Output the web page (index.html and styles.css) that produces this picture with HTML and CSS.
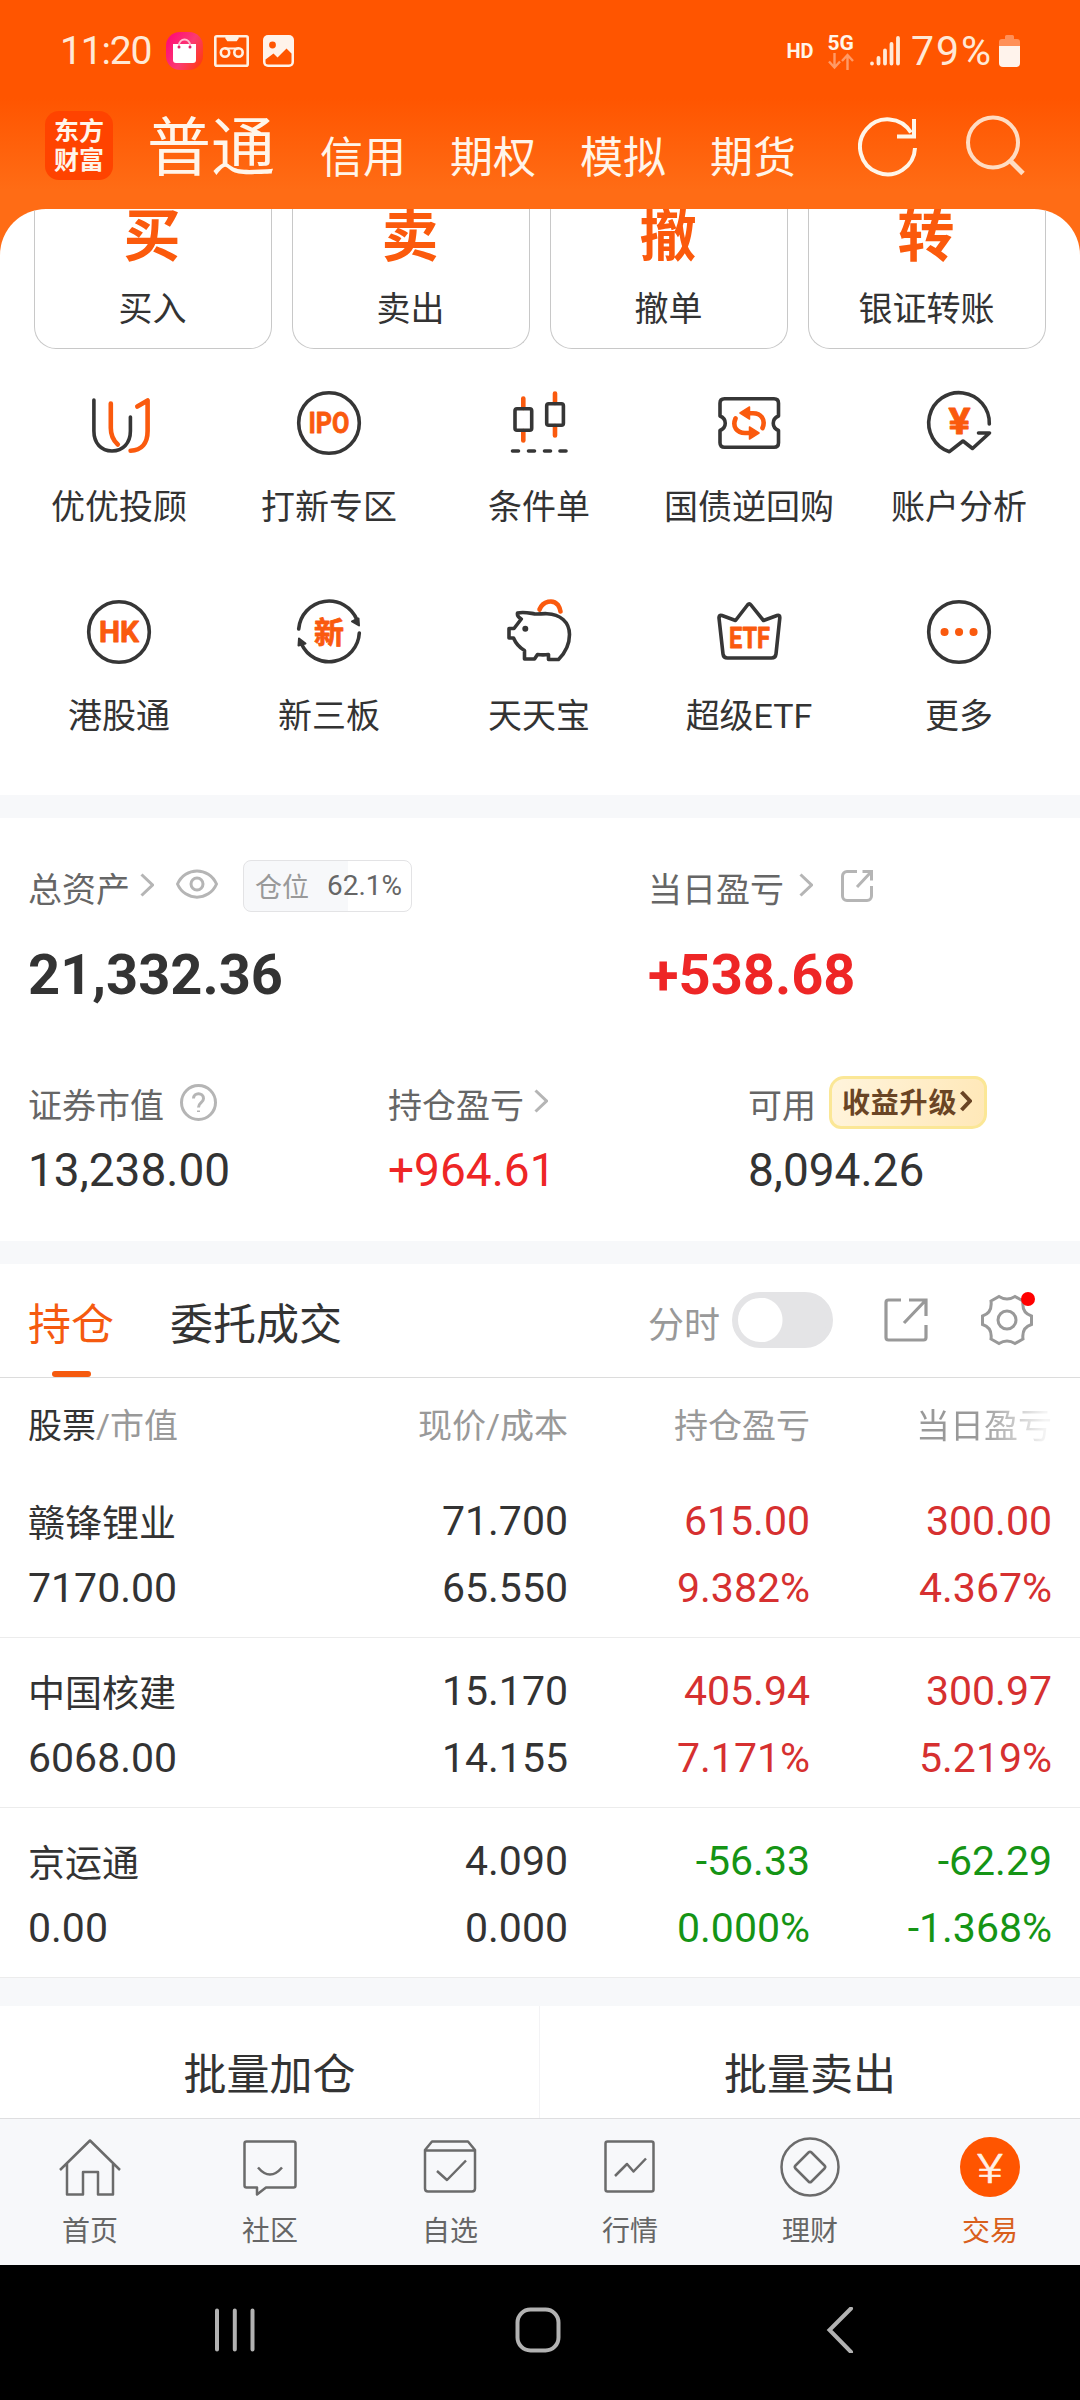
FILE: index.html
```html
<!doctype html>
<html lang="zh-CN">
    <head>
        <meta charset="UTF-8" />
        <meta name="viewport" content="width=device-width, initial-scale=1.0" />
        <title>交易</title>
        <link rel="stylesheet" href="styles.css">
    </head>
    <body>
        <header class="header">
            <div class="status-bar">
                <span class="time">11:20</span>
                <svg class="st-bag" width="37" height="38" viewBox="0 0 37 38">
                    <defs>
                        <linearGradient id="bag" x1="0" y1="0.2" x2="1" y2="0.8">
                            <stop offset="0" stop-color="#ff0a78" />
                            <stop offset="0.55" stop-color="#fb3a72" />
                            <stop offset="1" stop-color="#ff3a10" />
                        </linearGradient>
                    </defs>
                    <rect width="37" height="38" rx="14" fill="url(#bag)" />
                    <path d="M7 12h23v16a3 3 0 0 1-3 3H10a3 3 0 0 1-3-3z" fill="#fff" />
                    <path d="M13 15v-2a5.500 5.500 0 0 1 11 0v2" fill="none" stroke="#ffc0d0" stroke-width="1.800" />
                    <circle cx="13" cy="15" r="1.500" fill="#e0206a" />
                    <circle cx="24" cy="15" r="1.500" fill="#e0206a" />
                </svg>
                <svg class="st-tape" width="35" height="32" viewBox="0 0 35 32" fill="none" stroke="#fff0e2" stroke-width="2.600">
                    <rect x="1.300" y="1.300" width="32.400" height="29.400" rx="1.500" />
                    <path d="M12 2l2 3h8l2-3" fill="#fff0e2" />
                    <circle cx="11" cy="17.500" r="4.200" />
                    <circle cx="24.500" cy="17.500" r="4.200" />
                    <path d="M11 13.500h13.500" stroke-width="2" />
                </svg>
                <svg class="st-image" width="31" height="32" viewBox="0 0 31 32">
                    <rect width="31" height="32" rx="5" fill="#fff3ea" />
                    <circle cx="9.500" cy="10" r="3.400" fill="#ff5500" />
                    <path d="M2.500 24.500l8-6 4 4 9-9 5 5v8.500a2.500 2.500 0 0 1-2.500 2.500H5a2.500 2.500 0 0 1-2.500-2.500z" fill="#ff5500" />
                </svg>
                <span class="status-gap"></span>
                <span class="hd">HD</span>
                <span class="net">
                    <span>5G</span>
                    <svg width="26" height="17" viewBox="0 0 26 17" fill="none" stroke="#ff9a66" stroke-width="2.400">
                        <path d="M6.500 0v14M1 8.500l5.500 6 5.500-6M19.500 17V2M14 8l5.500-6 5.500 6" />
                    </svg>
                </span>
                <svg class="st-signal" width="30" height="30" viewBox="0 0 30 30" stroke="#ffe9d8" stroke-width="3.800" stroke-linecap="round">
                    <path d="M2 27.500v.1M8.500 22v5.500M15 14.500v13M21.500 8v19.500M28 2v25.500" />
                </svg>
                <span class="percent">79%</span>
                <svg class="st-battery" width="21" height="32" viewBox="0 0 21 32">
                    <path d="M6 4V1.500Q6 0 7.500 0h6Q15 0 15 1.500V4h3q3 0 3 3v5H0V7q0-3 3-3z" fill="#ff9058" />
                    <path d="M0 11h21v17q0 4-4 4H4q-4 0-4-4z" fill="#fff3ec" />
                </svg>
            </div>
            <nav class="top-nav">
                <div class="logo"><span>东方</span><span>财富</span></div>
                <span class="market active">普通</span>
                <span class="market">信用</span>
                <span class="market">期权</span>
                <span class="market">模拟</span>
                <span class="market">期货</span>
                <svg class="ic-refresh" width="62" height="62" viewBox="0 0 62 62" fill="none" stroke="#fff5e8" stroke-width="4">
                    <path d="M57 33A27.500 27.500 0 1 1 53 17.500" />
                    <path d="M39 21.500h17V4" />
                </svg>
                <svg class="ic-search" width="62" height="62" viewBox="0 0 62 62" fill="none" stroke="#ffdcc2" stroke-width="4">
                    <circle cx="29" cy="28.500" r="25" />
                    <path d="M46 46.500l13 13" stroke-width="5" />
                </svg>
            </nav>
        </header>

        <main class="panel-wrap">
            <section class="panel">
                <div class="cards">
                    <div class="card"><b>买</b><span>买入</span></div>
                    <div class="card"><b>卖</b><span>卖出</span></div>
                    <div class="card"><b>撤</b><span>撤单</span></div>
                    <div class="card"><b>转</b><span>银证转账</span></div>
                </div>
                <div class="quick">
                    <div class="quick-item">
                        <svg class="icon" viewBox="0 0 64 64">
                            <path d="M6.900 9v31C6.900 52 14 60 25 60s18.400-8 18.400-20V26" />
                            <path class="hot" d="M23.800 12.500V37c0 8 2.500 12.500 7 16.500M50.300 15.500l10.300-6V40c0 12-6 19.500-17 19.700" />
                        </svg>
                        <span>优优投顾</span>
                    </div>
                    <div class="quick-item">
                        <svg class="icon" viewBox="0 0 64 64">
                            <circle cx="32" cy="32" r="30.300" />
                            <text class="icon-text" x="11.500" y="42" font-size="29" textLength="41" lengthAdjust="spacingAndGlyphs">IPO</text>
                        </svg>
                        <span>打新专区</span>
                    </div>
                    <div class="quick-item">
                        <svg class="icon" viewBox="0 0 64 64">
                            <path class="hot" d="M16.300 7.500V17M16.300 40v9.500M48 2.500V12M48 35v9.500" />
                            <rect x="8" y="17.800" width="16.700" height="21.500" rx="2" />
                            <rect x="39.700" y="12.800" width="16.700" height="21.500" rx="2" />
                            <path d="M5.500 60h6M21.500 60h6M37.500 60h6M53 60h6" />
                        </svg>
                        <span>条件单</span>
                    </div>
                    <div class="quick-item">
                        <svg class="icon" viewBox="0 0 64 64">
                            <path d="M7.500 7.700h49.500q4.500 0 4.500 4.500V25c-7 3-7 11.500 0 14.500v12.300q0 4.500-4.500 4.500H7.500q-4.500 0-4.500-4.500V39.500c7-3 7-11.500 0-14.500V12.200q0-4.500 4.500-4.500z" />
                            <path class="hot" d="M18.500 27.500C15 36 20 42 28 42h5M45.500 37C49 28.500 44 22.300 36 22.300h-5" />
                            <path class="hot-fill" d="M32.500 36l9.500 6-9.500 6zM32.500 16l-9.500 6 9.500 6z" />
                        </svg>
                        <span>国债逆回购</span>
                    </div>
                    <div class="quick-item">
                        <svg class="icon" viewBox="0 0 64 64">
                            <path d="M62.300 33A30.300 30.300 0 1 0 22.400 60.700L36 50l9.500 7.500L62.500 42h-11" />
                            <text class="icon-text" x="21.500" y="43" font-size="37" textLength="22" lengthAdjust="spacingAndGlyphs">¥</text>
                        </svg>
                        <span>账户分析</span>
                    </div>
                    <div class="quick-item">
                        <svg class="icon" viewBox="0 0 64 64">
                            <circle cx="32" cy="32" r="30.300" />
                            <text class="icon-text" x="12" y="42" font-size="29" textLength="40" lengthAdjust="spacingAndGlyphs">HK</text>
                        </svg>
                        <span>港股通</span>
                    </div>
                    <div class="quick-item">
                        <svg class="icon" viewBox="0 0 64 64">
                            <path d="M1.700 29A30.300 30.300 0 0 1 60 20M62.300 33A30.300 30.300 0 0 1 4.500 44" />
                            <path class="dark-fill" d="M62 25.500l-7-4 6.500-3zM2 38.500l6.500 5-7 2z" />
                            <text class="icon-text cjk" x="17" y="43" font-size="30">新</text>
                        </svg>
                        <span>新三板</span>
                    </div>
                    <div class="quick-item">
                        <svg class="icon" viewBox="0 0 64 64">
                            <path class="hot" d="M32.500 9.500C36 1 46-1 51 5q2 3 2.500 6.500" />
                            <path d="M2 28.500V38h4.500c2.500 6 6 9.500 11 12.500V59h10l3-4.500c4 .6 7 .6 11 0v5h10C57 54 62.500 45 62.500 34.500 62.500 22 53 14 40 13.700c-5-.2-8 .6-12.500.2C22 13 17 11.500 10.500 13c-.5 2.500 1 4.500 3.800 6L7 28.500z" />
                            <circle class="dark-fill" cx="18.300" cy="28.700" r="2" />
                        </svg>
                        <span>天天宝</span>
                    </div>
                    <div class="quick-item">
                        <svg class="icon" viewBox="0 0 64 64">
                            <path d="M2 18q-.2-3.500 3-2.500l13.500 5L30.500 5q1.800-2.200 3.500 0l12.500 15.500L60 15.500q3-1 2.800 2.500L59 54q-.5 4-4.500 4h-44q-4 0-4.500-4z" />
                            <text class="icon-text" x="12" y="48" font-size="29" textLength="41" lengthAdjust="spacingAndGlyphs">ETF</text>
                        </svg>
                        <span>超级ETF</span>
                    </div>
                    <div class="quick-item">
                        <svg class="icon" viewBox="0 0 64 64">
                            <circle cx="32" cy="32" r="30.300" />
                            <path class="dots" d="M17.500 32h.1M32 32h.1M46.500 32h.1" />
                        </svg>
                        <span>更多</span>
                    </div>
                </div>
            </section>
        </main>

        <section class="assets">
            <div class="assets-top">
                <div class="total">
                    <div class="label-row">
                        <span>总资产</span>
                        <svg class="chevron" viewBox="0 0 14 24"><path d="M1.500 1.500L12.500 12 1.500 22.500" /></svg>
                        <svg class="eye" viewBox="0 0 42 30">
                            <path d="M1.500 15C9-2.500 33-2.500 40.500 15 33 32.500 9 32.500 1.500 15z" />
                            <circle cx="21" cy="15" r="6" />
                        </svg>
                        <div class="position"><span>仓位</span><em>62.1%</em></div>
                    </div>
                    <div class="amount">21,332.36</div>
                </div>
                <div class="today">
                    <div class="label-row">
                        <span>当日盈亏</span>
                        <svg class="chevron wide" viewBox="0 0 14 24"><path d="M1.500 1.500L12.500 12 1.500 22.500" /></svg>
                        <svg class="share-sm" viewBox="0 0 32 32">
                            <path d="M16 1.500H6A4.500 4.500 0 0 0 1.500 6v20A4.500 4.500 0 0 0 6 30.500h20a4.500 4.500 0 0 0 4.500-4.500V16M16 17L30 2M21.500 1.500h9v9" />
                        </svg>
                    </div>
                    <div class="amount up">+538.68</div>
                </div>
            </div>
            <div class="assets-bottom">
                <div class="cell">
                    <div class="label-row">
                        <span>证券市值</span>
                        <svg class="help" viewBox="0 0 37 37">
                            <circle cx="18.500" cy="18.500" r="17" />
                            <path d="M13.500 14.500c0-6.500 10-6.500 10 0 0 4.500-5 4-5 9M18.500 26.500v1.500" />
                        </svg>
                    </div>
                    <div class="value">13,238.00</div>
                </div>
                <div class="cell">
                    <div class="label-row">
                        <span>持仓盈亏</span>
                        <svg class="chevron" viewBox="0 0 14 24"><path d="M1.500 1.500L12.500 12 1.500 22.500" /></svg>
                    </div>
                    <div class="value up">+964.61</div>
                </div>
                <div class="cell">
                    <div class="label-row">
                        <span>可用</span>
                        <div class="upgrade">
                            收益升级
                            <svg width="12" height="22" viewBox="0 0 12 22"><path d="M1.500 2L10 11l-8.500 9" /></svg>
                        </div>
                    </div>
                    <div class="value">8,094.26</div>
                </div>
            </div>
        </section>

        <section class="holdings">
            <div class="tabs">
                <span class="tab active">持仓</span>
                <span class="tab">委托成交</span>
                <span class="minute">分时</span>
                <span class="switch"></span>
                <svg class="share" viewBox="0 0 44 44">
                    <path d="M17 2H4.500Q2 2 2 4.500v35Q2 42 4.500 42h35q2.500 0 2.500-2.500V27M42 18V2H25M20 25L41 3" />
                </svg>
                <div class="gear">
                    <svg viewBox="0 0 52 52">
                        <path d="M18 2.500q8 5 16 0l8 4.500c-1 8 2 13 8.500 15v8.500c-6.500 2-9.500 7-8.500 14.500l-8 4.500q-8-5-16 0l-8-4.500c1-7.500-2-12.500-8.500-14.500V22c6.500-2 9.500-7 8.500-15z" />
                        <circle cx="26" cy="26" r="9" />
                    </svg>
                    <i class="dot"></i>
                </div>
            </div>
            <div class="table">
                <div class="row head">
                    <span><b>股票</b>/市值</span>
                    <span>现价/成本</span>
                    <span>持仓盈亏</span>
                    <span class="fade">当日盈亏</span>
                </div>
                <div class="row">
                    <div><span class="name">赣锋锂业</span><span>7170.00</span></div>
                    <div><span>71.700</span><span>65.550</span></div>
                    <div class="red"><span>615.00</span><span>9.382%</span></div>
                    <div class="red"><span>300.00</span><span>4.367%</span></div>
                </div>
                <div class="row">
                    <div><span class="name">中国核建</span><span>6068.00</span></div>
                    <div><span>15.170</span><span>14.155</span></div>
                    <div class="red"><span>405.94</span><span>7.171%</span></div>
                    <div class="red"><span>300.97</span><span>5.219%</span></div>
                </div>
                <div class="row">
                    <div><span class="name">京运通</span><span>0.00</span></div>
                    <div><span>4.090</span><span>0.000</span></div>
                    <div class="green"><span>-56.33</span><span>0.000%</span></div>
                    <div class="green"><span>-62.29</span><span>-1.368%</span></div>
                </div>
            </div>
        </section>

        <div class="batch">
            <span>批量加仓</span>
            <span>批量卖出</span>
        </div>

        <nav class="tab-bar">
            <div class="tab-item">
                <svg viewBox="0 0 64 64"><path d="M2 35L32 5.500 62 35M9 29v30.500h16V37h15v22.500h15V29" /></svg>
                <span>首页</span>
            </div>
            <div class="tab-item">
                <svg viewBox="0 0 64 64">
                    <path d="M8.500 6.500h47q2 0 2 2v42q0 2-2 2H28l-9 7v-7H8.500q-2 0-2-2v-42q0-2 2-2z" />
                    <path d="M20 32.500q12 14 24 0" />
                </svg>
                <span>社区</span>
            </div>
            <div class="tab-item">
                <svg viewBox="0 0 64 64">
                    <path d="M14 6.500h36l7 8.500v38.500q0 3-3 3H10q-3 0-3-3V15zM7 15.500h50M19 36l10 9 19-19.500" />
                </svg>
                <span>自选</span>
            </div>
            <div class="tab-item">
                <svg viewBox="0 0 64 64">
                    <rect x="7.500" y="6.500" width="48" height="50" rx="2" />
                    <path d="M17 41l12-12 6.500 7.500L48 23.500" />
                </svg>
                <span>行情</span>
            </div>
            <div class="tab-item">
                <svg viewBox="0 0 64 64">
                    <circle cx="32" cy="32" r="28.500" />
                    <path d="M30.500 17.500q1.500-1.500 3 0l13 13q1.500 1.500 0 3l-13 13q-1.500 1.500-3 0l-13-13q-1.500-1.500 0-3z" />
                </svg>
                <span>理财</span>
            </div>
            <div class="tab-item active">
                <svg viewBox="0 0 64 64">
                    <circle class="coin" cx="32" cy="32" r="30" />
                    <text class="coin-text" x="19" y="47.500" font-size="40" textLength="26" lengthAdjust="spacingAndGlyphs">¥</text>
                </svg>
                <span>交易</span>
            </div>
        </nav>

        <footer class="sys-nav">
            <svg width="46" height="46" viewBox="0 0 46 46"><path d="M5 3.500v39M22.800 3.500v39M40.500 3.500v39" /></svg>
            <svg width="46" height="46" viewBox="0 0 46 46"><rect x="2.500" y="2.500" width="41" height="41" rx="13" /></svg>
            <svg width="46" height="46" viewBox="0 0 46 46"><path d="M34 1.500L12.500 23 34 45" /></svg>
        </footer>
    </body>
</html>
```
FILE: styles.css
```css
* {
    box-sizing: border-box;
}

body {
    margin: 0;
    width: 1080px;
    height: 2400px;
    overflow: hidden;
    font-family: Roboto, "Noto Sans CJK SC", sans-serif;
    font-size: 34px;
    color: #333;
    background: #f7f8fa;
}

svg {
    display: block;
    flex: none;
}

/* header */
.header {
    height: 209px;
    background: linear-gradient(#ff5500 0, #ff5500 98px, #ff6c15 190px, #ff6c15);
    color: #fff5ea;
}
.status-bar {
    display: flex;
    align-items: center;
    height: 96px;
    padding: 6px 60px 0;
}
.time {
    width: 106px;
    font-size: 39px;
    letter-spacing: -1.2px;
    color: #ffe9d6;
}
.st-tape {
    margin-left: 11px;
}
.st-image {
    margin-left: 14px;
}
.status-gap {
    flex: 1;
}
.hd {
    font-size: 20px;
    font-weight: 700;
}
.net {
    margin: 0 0 0 14px;
    font-size: 21px;
    font-weight: 700;
    line-height: 20px;
}
.st-signal {
    margin-left: 16px;
}
.percent {
    margin-left: 11px;
    font-size: 41px;
    letter-spacing: 2px;
    color: #ffe9d6;
}
.st-battery {
    margin-left: 6px;
}
.top-nav {
    display: flex;
    height: 113px;
    padding: 15px 0 0 45px;
}
.logo {
    display: flex;
    flex-direction: column;
    align-items: center;
    width: 68px;
    height: 69px;
    margin-right: 34px;
    padding-top: 6px;
    border-radius: 14px;
    background: #ff4300;
    font-size: 25px;
    font-weight: 700;
    line-height: 29px;
}
.market {
    margin-right: 44px;
    padding-top: 20px;
    font-size: 43px;
    line-height: 54px;
}
.market.active {
    margin-right: 45px;
    padding-top: 2px;
    font-size: 64px;
    line-height: 72px;
}
.ic-refresh {
    margin: 4px 0 0 18px;
}
.ic-search {
    margin: 3px 0 0 44px;
}

/* trade shortcuts */
.panel-wrap {
    background: #ff6c15;
}
.panel {
    height: 586px;
    border-radius: 46px 46px 0 0;
    background: #fff;
    overflow: hidden;
}
.cards {
    display: grid;
    grid-template-columns: repeat(4, 238px);
    gap: 20px;
    padding-left: 34px;
}
.card {
    height: 140px;
    border: 1px solid #c8c8c8;
    border-top: none;
    border-radius: 0 0 22px 22px;
    text-align: center;
}
.card b {
    display: block;
    margin: -1px 0 24px;
    padding-right: 2px;
    font-size: 57px;
    font-weight: 700;
    line-height: 57px;
    color: #fb5a0c;
}
.card span {
    display: block;
    padding-right: 1px;
    line-height: 40px;
}
.quick {
    display: grid;
    grid-template-columns: repeat(5, 210px);
    row-gap: 73px;
    padding: 42px 0 0 14px;
}
.quick-item {
    display: flex;
    flex-direction: column;
    align-items: center;
    line-height: 40px;
}
.icon {
    width: 64px;
    height: 64px;
    margin-bottom: 32px;
    overflow: visible;
    fill: none;
    stroke: #363636;
    stroke-width: 3.6;
    stroke-linecap: round;
    stroke-linejoin: round;
}
.icon .hot {
    stroke: #fa5a0e;
    stroke-width: 4.6;
}
.icon .hot-fill {
    fill: #fa5a0e;
    stroke: #fa5a0e;
    stroke-width: 1.5;
}
.icon .dark-fill {
    fill: #363636;
    stroke-width: 2;
}
.icon .dots {
    stroke: #fa5a0e;
    stroke-width: 8;
}
.icon-text {
    fill: #fa5a0e;
    stroke: #fa5a0e;
    stroke-width: 0.8;
    font-weight: 700;
}

/* assets */
.assets {
    height: 446px;
    margin-top: 23px;
    border-bottom: 23px solid #f7f8fa;
    background: #fff;
}
.label-row {
    display: flex;
    align-items: center;
    height: 52px;
    color: #666;
}
.label-row > span {
    padding-top: 3px;
}
.label-row svg {
    fill: none;
    stroke: #b5b5b5;
    stroke-width: 3;
}
.assets-top {
    display: flex;
    height: 226px;
    padding: 42px 0 0 28px;
}
.total {
    flex: none;
    width: 620px;
}
.chevron {
    width: 14px;
    height: 24px;
    margin: -2px 0 0 10px;
}
.chevron.wide {
    margin-left: 15px;
}
.eye {
    width: 42px;
    height: 30px;
    margin: -4px 0 0 22px;
}
.share-sm {
    width: 32px;
    height: 32px;
    margin: -1px 0 0 28px;
}
.position {
    display: flex;
    align-items: center;
    width: 169px;
    height: 52px;
    margin-left: 25px;
    padding: 0 0 2px 11px;
    border: 1px solid #e3e3e5;
    border-radius: 8px;
    background: linear-gradient(90deg, #f7f8fa 62.1%, #fff 62.1%);
    font-size: 27px;
    color: #999;
}
.position em {
    margin-left: 18px;
    font-size: 28px;
    font-style: normal;
    color: #666;
}
.amount {
    margin-top: 28px;
    font-size: 56px;
    font-weight: 700;
    line-height: 70px;
}
.up {
    color: #ee2626;
}
.assets-bottom {
    display: flex;
    padding: 32px 0 0 28px;
}
.cell {
    flex: none;
    width: 360px;
}
.help {
    width: 37px;
    height: 37px;
    margin: 0 0 0 16px;
}
.value {
    margin-top: 14px;
    font-size: 46px;
    line-height: 56px;
}
.upgrade {
    display: flex;
    align-items: center;
    gap: 3px;
    width: 158px;
    height: 53px;
    margin-left: 13px;
    padding: 0 0 2px 10px;
    border: 3px solid #fbe796;
    border-radius: 15px 12px 15px 12px;
    background: linear-gradient(100deg, #fff4dc, #ffe8b8);
    font-size: 28px;
    font-weight: 700;
    letter-spacing: 0.8px;
    color: #6a4525;
    white-space: nowrap;
}
.upgrade svg {
    stroke: #6a4525;
    stroke-width: 4;
}

/* holdings */
.holdings {
    background: #fff;
}
.tabs {
    display: flex;
    align-items: center;
    height: 114px;
    padding: 6px 0 0 28px;
    border-bottom: 1px solid #dcdcdc;
}
.tab {
    position: relative;
    margin-right: 56px;
    padding-top: 3px;
    font-size: 43px;
    line-height: 107px;
}
.tab.active {
    color: #f55a0f;
}
.tab.active::after {
    content: "";
    position: absolute;
    left: 24px;
    bottom: 2px;
    width: 39px;
    height: 6px;
    border-radius: 3px;
    background: #f55a0f;
}
.minute {
    margin: -4px 0 0 250px;
    font-size: 36px;
    color: #999;
}
.switch {
    width: 101px;
    height: 56px;
    margin: -8px 0 0 12px;
    border: 6px solid #e4e4e6;
    border-radius: 28px;
    background: radial-gradient(circle at 22px 22px, #fff 22px, #e4e4e6 23px);
}
.share,
.gear svg {
    fill: none;
    stroke: #999;
    stroke-width: 3.2;
}
.share {
    width: 44px;
    height: 44px;
    margin: -7px 0 0 51px;
}
.gear {
    position: relative;
    margin: -7px 0 0 53px;
}
.gear svg {
    width: 52px;
    height: 52px;
    stroke-width: 3;
}
.dot {
    position: absolute;
    top: -2px;
    right: -2px;
    width: 14px;
    height: 14px;
    border-radius: 50%;
    background: #f00;
}
.row {
    display: grid;
    grid-template-columns: 240px 300px 242px 242px;
    height: 170px;
    padding: 20px 0 0 28px;
    border-bottom: 1px solid #ececec;
    font-size: 41px;
    line-height: 67px;
    text-align: right;
}
.row > :first-child {
    text-align: left;
}
.row div span {
    display: block;
}
.row .name {
    font-size: 37px;
    padding-top: 6px;
    line-height: 61px;
}
.row.head {
    height: 90px;
    padding-top: 15px;
    border-bottom: none;
    font-size: 34px;
    line-height: 66px;
    color: #999;
}
.row.head b {
    font-weight: 400;
    color: #333;
}
.fade {
    background: linear-gradient(90deg, #999 170px, #f4f4f4 235px);
    background-clip: text;
    color: transparent;
}
.red {
    color: #d63030;
}
.green {
    color: #159415;
}

.batch {
    display: flex;
    height: 112px;
    margin-top: 28px;
    background: #fff;
    font-size: 43px;
    line-height: 139px;
    text-align: center;
}
.batch span {
    width: 50%;
}
.batch span:first-child {
    border-right: 1px solid #f3f3f5;
}

/* bottom navigation */
.tab-bar {
    display: flex;
    height: 147px;
    border-top: 1px solid #dedee0;
    background: #f7f8fa;
}
.tab-item {
    display: flex;
    flex-direction: column;
    align-items: center;
    width: 180px;
    padding-top: 16px;
    font-size: 28px;
    line-height: 32px;
    color: #666;
}
.tab-item svg {
    width: 64px;
    height: 64px;
    margin-bottom: 17px;
    fill: none;
    stroke: #6b6b6b;
    stroke-width: 2.5;
    stroke-linejoin: round;
}
.tab-item.active {
    color: #d9601c;
}
.tab-item .coin {
    fill: #ff5500;
    stroke: none;
}
.tab-item .coin-text {
    fill: #fff0e6;
    stroke: #fff0e6;
    stroke-width: 0.6;
    font-weight: 300;
}
.sys-nav {
    display: flex;
    align-items: center;
    justify-content: space-between;
    height: 135px;
    padding: 0 217px 5px 212px;
    background: #000;
    fill: none;
    stroke: #b2b2b2;
    stroke-width: 4;
    stroke-linecap: round;
}
```
